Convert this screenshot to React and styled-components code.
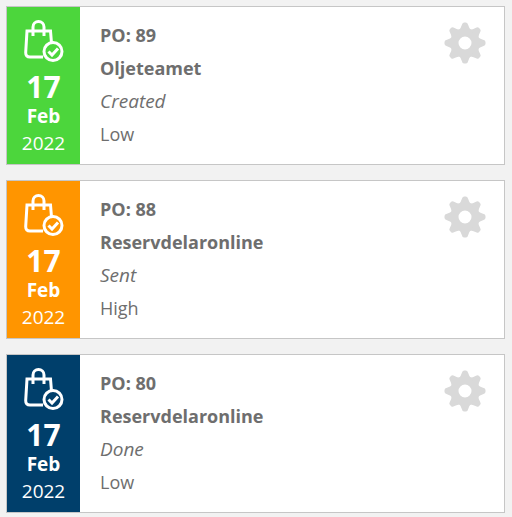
import React from "react";
import styled, { createGlobalStyle } from "styled-components";

const GlobalStyle = createGlobalStyle`
  * {
    box-sizing: border-box;
  }

  body {
    margin: 0;
    background: #f2f2f2;
    color: #6e6e6e;
    font-family: "Open Sans", "Noto Sans", sans-serif;
    font-size: 18px;
  }
`;

const OrderList = styled.ul`
  display: flex;
  flex-direction: column;
  gap: 15px;
  margin: 0;
  padding: 6px 7px 4px 6px;
  list-style: none;
`;

const OrderCard = styled.li`
  display: flex;
  align-items: stretch;
  border: 1px solid #c6c6c6;
  background: #ffffff;
`;

const DatePanel = styled.div`
  display: flex;
  flex: 0 0 73px;
  flex-direction: column;
  align-items: center;
  padding: 13px 0 6px;
  background: ${({ $color }) => $color};
  color: #ffffff;
`;

const BagSvg = styled.svg`
  width: 40px;
  height: 42px;
  margin-bottom: 8px;
`;

const Day = styled.span`
  font-size: 30px;
  font-weight: 700;
  line-height: 34px;
`;

const Month = styled.span`
  font-size: 19px;
  font-weight: 700;
  line-height: 25px;
`;

const Year = styled.span`
  font-size: 19px;
  line-height: 28px;
`;

const Details = styled.div`
  flex: 1;
  min-width: 0;
  padding: 12px 20px 13px;
`;

const Detail = styled.p`
  margin: 0;
  line-height: 33px;
  font-weight: ${({ $strong }) => ($strong ? 700 : 400)};
`;

const Status = styled(Detail)`
  font-size: 19px;
  font-style: italic;
`;

const SettingsButton = styled.button`
  align-self: flex-start;
  display: flex;
  margin: 15px 18px 0 0;
  padding: 0;
  border: 0;
  background: none;
  color: #d9d9d9;
  cursor: pointer;
`;

const GearSvg = styled.svg`
  width: 42px;
  height: 42px;
`;

function BagIcon() {
  return (
    <BagSvg viewBox="0 0 40 42" fill="none" stroke="currentColor" strokeWidth="3" aria-hidden="true">
      <path d="M27.5 23 L26.5 11 H3 L1.7 32.5 Q1.6 37 6 37 H19" strokeLinejoin="miter" />
      <path d="M9 16 V7 A5.5 5.5 0 0 1 20 7 V16" />
      <circle cx="29" cy="31.5" r="9" />
      <path d="M24.5 31.5 L28 35 L34 28.5" />
    </BagSvg>
  );
}

const TOOTH_ANGLES = [0, 45, 90, 135, 180, 225, 270, 315];

function GearIcon() {
  return (
    <GearSvg viewBox="-21 -21 42 42" fill="currentColor" aria-hidden="true">
      <circle r="10.5" fill="none" stroke="currentColor" strokeWidth="8" />
      {TOOTH_ANGLES.map((angle) => (
        <path
          key={angle}
          transform={`rotate(${angle})`}
          d="M-6 -13 Q-4.2 -14.5 -3.2 -18 Q-2.6 -20.5 -1 -20.5 H1 Q2.6 -20.5 3.2 -18 Q4.2 -14.5 6 -13 Z"
        />
      ))}
    </GearSvg>
  );
}

const orders = [
  { po: 89, supplier: "Oljeteamet", status: "Created", priority: "Low", color: "#4cd63c" },
  { po: 88, supplier: "Reservdelaronline", status: "Sent", priority: "High", color: "#ff9500" },
  { po: 80, supplier: "Reservdelaronline", status: "Done", priority: "Low", color: "#003f6b" },
];

export default function App() {
  return (
    <>
      <GlobalStyle />
      <OrderList>
        {orders.map((order) => (
          <OrderCard key={order.po}>
            <DatePanel $color={order.color}>
              <BagIcon />
              <Day>17</Day>
              <Month>Feb</Month>
              <Year>2022</Year>
            </DatePanel>
            <Details>
              <Detail $strong>PO: {order.po}</Detail>
              <Detail $strong>{order.supplier}</Detail>
              <Status>{order.status}</Status>
              <Detail>{order.priority}</Detail>
            </Details>
            <SettingsButton type="button" aria-label={`Settings for PO ${order.po}`}>
              <GearIcon />
            </SettingsButton>
          </OrderCard>
        ))}
      </OrderList>
    </>
  );
}
